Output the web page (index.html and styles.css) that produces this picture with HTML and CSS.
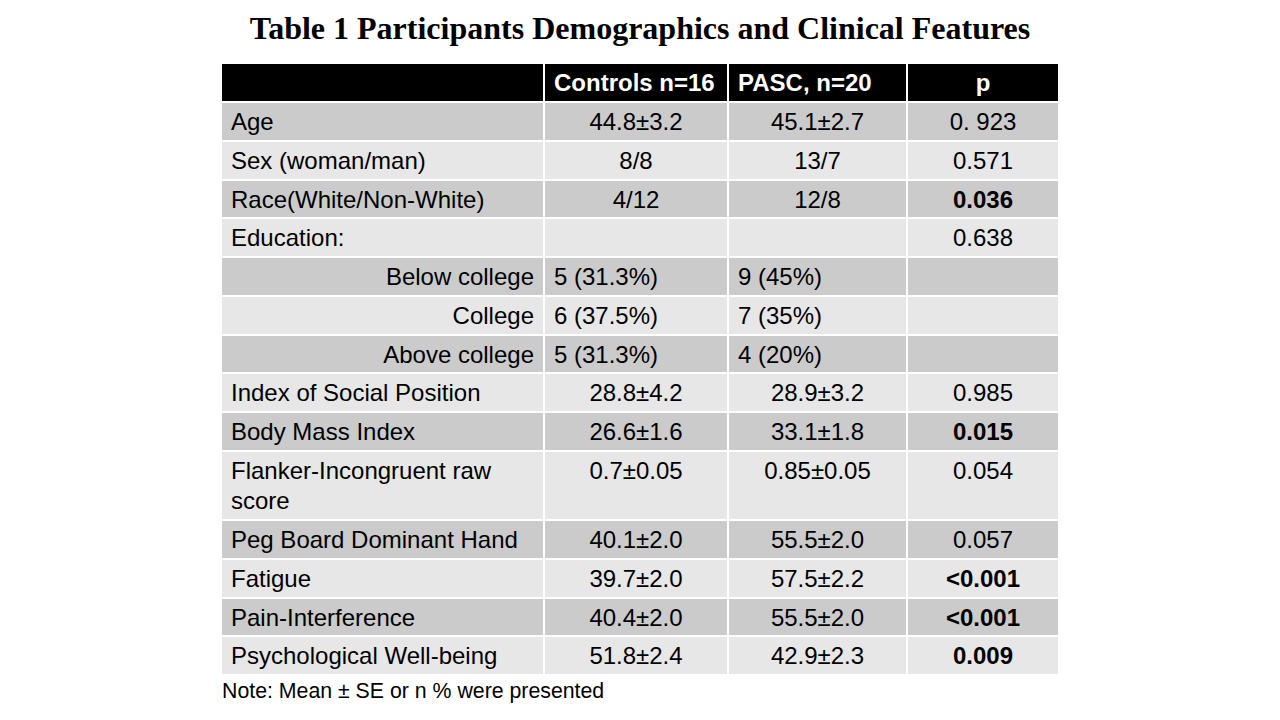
FILE: index.html
```html
<!DOCTYPE html>
<html lang="en">
<head>
<meta charset="utf-8">
<title>Table 1 Participants Demographics and Clinical Features</title>
<link rel="stylesheet" href="styles.css">
</head>
<body>
<h1 class="title">Table 1 Participants Demographics and Clinical Features</h1>
<div class="wrap">
  <div class="table">
    <div class="row head">
      <div class="cell"></div>
      <div class="cell">Controls n=16</div>
      <div class="cell">PASC, n=20</div>
      <div class="cell c">p</div>
    </div>
    <div class="row dark">
      <div class="cell">Age</div>
      <div class="cell c">44.8±3.2</div>
      <div class="cell c">45.1±2.7</div>
      <div class="cell c">0. 923</div>
    </div>
    <div class="row light">
      <div class="cell">Sex (woman/man)</div>
      <div class="cell c">8/8</div>
      <div class="cell c">13/7</div>
      <div class="cell c">0.571</div>
    </div>
    <div class="row dark">
      <div class="cell">Race(White/Non-White)</div>
      <div class="cell c">4/12</div>
      <div class="cell c">12/8</div>
      <div class="cell c b">0.036</div>
    </div>
    <div class="row light">
      <div class="cell">Education:</div>
      <div class="cell"></div>
      <div class="cell"></div>
      <div class="cell c">0.638</div>
    </div>
    <div class="row dark">
      <div class="cell r">Below college</div>
      <div class="cell">5 (31.3%)</div>
      <div class="cell">9 (45%)</div>
      <div class="cell"></div>
    </div>
    <div class="row light">
      <div class="cell r">College</div>
      <div class="cell">6 (37.5%)</div>
      <div class="cell">7 (35%)</div>
      <div class="cell"></div>
    </div>
    <div class="row dark">
      <div class="cell r">Above college</div>
      <div class="cell">5 (31.3%)</div>
      <div class="cell">4 (20%)</div>
      <div class="cell"></div>
    </div>
    <div class="row light">
      <div class="cell">Index of Social Position</div>
      <div class="cell c">28.8±4.2</div>
      <div class="cell c">28.9±3.2</div>
      <div class="cell c">0.985</div>
    </div>
    <div class="row dark">
      <div class="cell">Body Mass Index</div>
      <div class="cell c">26.6±1.6</div>
      <div class="cell c">33.1±1.8</div>
      <div class="cell c b">0.015</div>
    </div>
    <div class="row light">
      <div class="cell">Flanker-Incongruent raw score</div>
      <div class="cell c">0.7±0.05</div>
      <div class="cell c">0.85±0.05</div>
      <div class="cell c">0.054</div>
    </div>
    <div class="row dark">
      <div class="cell">Peg Board Dominant Hand</div>
      <div class="cell c">40.1±2.0</div>
      <div class="cell c">55.5±2.0</div>
      <div class="cell c">0.057</div>
    </div>
    <div class="row light">
      <div class="cell">Fatigue</div>
      <div class="cell c">39.7±2.0</div>
      <div class="cell c">57.5±2.2</div>
      <div class="cell c b">&lt;0.001</div>
    </div>
    <div class="row dark">
      <div class="cell">Pain-Interference</div>
      <div class="cell c">40.4±2.0</div>
      <div class="cell c">55.5±2.0</div>
      <div class="cell c b">&lt;0.001</div>
    </div>
    <div class="row light">
      <div class="cell">Psychological Well-being</div>
      <div class="cell c">51.8±2.4</div>
      <div class="cell c">42.9±2.3</div>
      <div class="cell c b">0.009</div>
    </div>
  </div>
  <p class="note">Note: Mean ± SE or n % were presented</p>
</div>
</body>
</html>
```

FILE: styles.css
```css
html, body {
  margin: 0;
  padding: 0;
  background: #ffffff;
}

body {
  width: 1280px;
  height: 720px;
  overflow: hidden;
  font-family: "Liberation Sans", Arial, sans-serif;
  color: #000;
}

.title {
  margin: 0 0 18px 0;
  padding-top: 10px;
  font-family: "Liberation Serif", "Times New Roman", serif;
  font-weight: bold;
  font-size: 32px;
  line-height: 36px;
  text-align: center;
}

.wrap {
  width: 836px;
  margin: 0 auto;
}

.table {
  display: grid;
  grid-template-columns: 321px 182px 177px 150px;
  grid-template-rows: 37px repeat(9, 36.75px) 67.25px repeat(4, 36.75px);
  gap: 2px;
  background: #ffffff;
}

.row {
  display: contents;
}

.cell {
  padding: 4px 9px 0 9px;
  font-size: 24px;
  line-height: 30px;
}

.head .cell {
  background: #000000;
  color: #ffffff;
  font-weight: bold;
  padding-top: 3.5px;
}

.dark .cell {
  background: #cbcbcb;
}

.light .cell {
  background: #e7e7e7;
}

.c {
  text-align: center;
}

.r {
  text-align: right;
}

.b {
  font-weight: bold;
}

.note {
  margin: 5px 0 0 0;
  font-size: 21.3px;
  line-height: 24px;
}
```
